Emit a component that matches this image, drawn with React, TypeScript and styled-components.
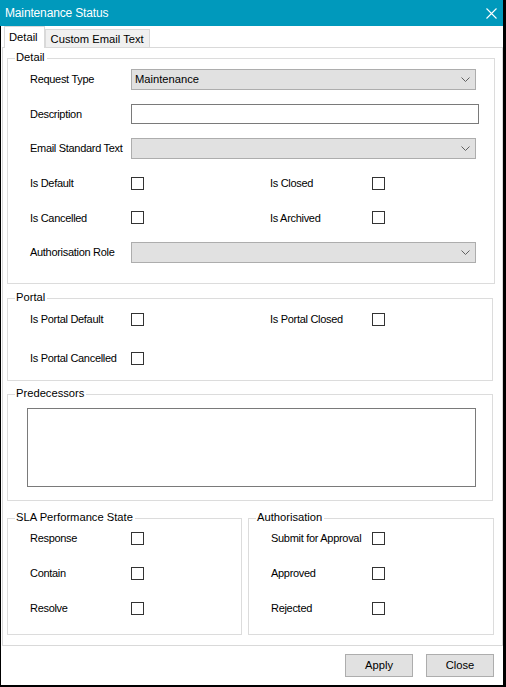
import React from 'react';
import styled, { createGlobalStyle } from 'styled-components';

const GlobalStyle = createGlobalStyle`
  html, body {
    margin: 0;
    padding: 0;
    background: #000;
  }
  * {
    box-sizing: border-box;
  }
`;

const Chevron = () => (
  <svg width="9" height="5" viewBox="0 0 9 5">
    <path d="M0.5 0.5 L4.5 4.5 L8.5 0.5" fill="none" stroke="#606060" strokeWidth="1" />
  </svg>
);

const CloseIcon = () => (
  <svg width="11" height="11" viewBox="0 0 11 11">
    <path d="M0.5 0.5 L10.5 10.5 M10.5 0.5 L0.5 10.5" stroke="#fff" strokeWidth="1.1" />
  </svg>
);

const App: React.FC = () => {
  return (
    <>
      <GlobalStyle />
      <Frame>
        <TitleBar>
          <span>Maintenance Status</span>
          <CloseIcon />
        </TitleBar>
        <Body>
          <TabStrip>
            <Tab $active>Detail</Tab>
            <Tab>Custom Email Text</Tab>
          </TabStrip>
          <Panel>
            <GroupBox $width={488}>
              <Caption>Detail</Caption>
              <DetailGrid>
                <Label>Request Type</Label>
                <Combo>
                  <span>Maintenance</span>
                  <Chevron />
                </Combo>
                <Label>Description</Label>
                <TextBox />
                <Label>Email Standard Text</Label>
                <Combo>
                  <span />
                  <Chevron />
                </Combo>
                <Label>Is Default</Label>
                <Check />
                <Label>Is Closed</Label>
                <Check />
                <Label>Is Cancelled</Label>
                <Check />
                <Label>Is Archived</Label>
                <Check />
                <Label>Authorisation Role</Label>
                <Combo>
                  <span />
                  <Chevron />
                </Combo>
              </DetailGrid>
            </GroupBox>

            <GroupBox $width={486} $top={14}>
              <Caption>Portal</Caption>
              <PortalGrid>
                <Label>Is Portal Default</Label>
                <Check />
                <Label>Is Portal Closed</Label>
                <Check />
                <Label>Is Portal Cancelled</Label>
                <Check />
              </PortalGrid>
            </GroupBox>

            <GroupBox $width={486} $top={13}>
              <Caption>Predecessors</Caption>
              <MemoWrap>
                <Memo />
              </MemoWrap>
            </GroupBox>

            <BottomRow>
              <GroupBox $width={235}>
                <Caption>SLA Performance State</Caption>
                <CheckList>
                  <Label>Response</Label>
                  <Check />
                  <Label>Contain</Label>
                  <Check />
                  <Label>Resolve</Label>
                  <Check />
                </CheckList>
              </GroupBox>
              <GroupBox $width={246}>
                <Caption>Authorisation</Caption>
                <CheckList>
                  <Label>Submit for Approval</Label>
                  <Check />
                  <Label>Approved</Label>
                  <Check />
                  <Label>Rejected</Label>
                  <Check />
                </CheckList>
              </GroupBox>
            </BottomRow>
          </Panel>
          <Footer>
            <Button>Apply</Button>
            <Button>Close</Button>
          </Footer>
        </Body>
      </Frame>
    </>
  );
};

const Frame = styled.div`
  display: flex;
  flex-direction: column;
  width: 506px;
  height: 687px;
  padding: 0 3px 2px 0;
  background: #000;
  font-family: 'Liberation Sans', Arial, sans-serif;
`;

const TitleBar = styled.div`
  display: flex;
  align-items: center;
  justify-content: space-between;
  flex: none;
  height: 26px;
  padding: 0 6px 0 5px;
  background: #0099bc;
  color: #fff;
  font-size: 12px;
  letter-spacing: -0.15px;
`;

const Body = styled.div`
  display: flex;
  flex-direction: column;
  flex: 1;
  margin-left: 1px;
  background: #fff;
`;

const TabStrip = styled.div`
  display: flex;
  align-items: flex-end;
  height: 21px;
  padding-left: 3px;
`;

const Tab = styled.div<{ $active?: boolean }>`
  position: relative;
  z-index: 1;
  display: flex;
  align-items: center;
  height: ${(p) => (p.$active ? '22px' : '18px')};
  margin-bottom: ${(p) => (p.$active ? '-1px' : '0')};
  padding: ${(p) => (p.$active ? '0 6px 1px 4px' : '1px 5px 0 5px')};
  border: 1px solid #d9d9d9;
  border-bottom: none;
  background: ${(p) => (p.$active ? '#fff' : '#f0f0f0')};
  color: #000;
  font-size: 11.2px;
  white-space: nowrap;
`;

const Panel = styled.div`
  display: flex;
  flex-direction: column;
  flex: none;
  margin-left: 1px;
  padding: 10px 0 10px 4px;
  border: 1px solid #d9d9d9;
`;

const GroupBox = styled.div<{ $width: number; $top?: number }>`
  position: relative;
  width: ${(p) => p.$width}px;
  margin-top: ${(p) => p.$top ?? 0}px;
  border: 1px solid #dcdcdc;
`;

const Caption = styled.div`
  position: absolute;
  top: -9px;
  left: 7px;
  padding: 0 2px 0 1px;
  background: #fff;
  color: #000;
  font-size: 11.2px;
  line-height: 15px;
  white-space: nowrap;
`;

const DetailGrid = styled.div`
  display: grid;
  grid-template-columns: 101px 139px 102px 1fr;
  grid-auto-rows: 34.6px;
  align-items: center;
  padding: 3px 0 13px 22px;

  & > div:nth-child(2),
  & > div:nth-child(4),
  & > div:nth-child(6),
  & > div:last-child {
    grid-column: 2 / -1;
  }
`;

const PortalGrid = styled.div`
  display: grid;
  grid-template-columns: 101px 139px 102px 13px;
  grid-template-rows: 35px 35px;
  row-gap: 4px;
  align-items: center;
  padding: 3px 0 4px 22px;
`;

const CheckList = styled.div`
  display: grid;
  grid-template-columns: 101px 13px;
  grid-auto-rows: 35px;
  align-items: center;
  padding: 2px 0 8px 22px;
`;

const MemoWrap = styled.div`
  padding: 13px 0 13px 19px;
`;

const BottomRow = styled.div`
  display: flex;
  gap: 6px;
  margin-top: 17px;
`;

const Label = styled.span`
  color: #000;
  font-size: 11px;
  letter-spacing: -0.3px;
  white-space: nowrap;
`;

const Combo = styled.div`
  display: flex;
  align-items: center;
  justify-content: space-between;
  width: 345px;
  height: 21px;
  padding: 0 5px 0 3px;
  border: 1px solid #adadad;
  background: #e1e1e1;
  color: #000;
  font-size: 11.2px;
`;

const TextBox = styled.div`
  width: 348px;
  height: 20px;
  border: 1px solid #7a7a7a;
  background: #fff;
`;

const Memo = styled.div`
  width: 449px;
  height: 79px;
  border: 1px solid #7a7a7a;
  background: #fff;
`;

const Check = styled.div`
  width: 13px;
  height: 13px;
  border: 1px solid #333;
  background: #fff;
`;

const Footer = styled.div`
  display: flex;
  flex: 1;
  justify-content: flex-end;
  align-items: flex-start;
  gap: 13px;
  padding: 8px 9px 0 0;
`;

const Button = styled.div`
  display: flex;
  align-items: center;
  justify-content: center;
  width: 68px;
  height: 23px;
  border: 1px solid #adadad;
  background: #e1e1e1;
  color: #000;
  font-size: 11.2px;
`;

export default App;
